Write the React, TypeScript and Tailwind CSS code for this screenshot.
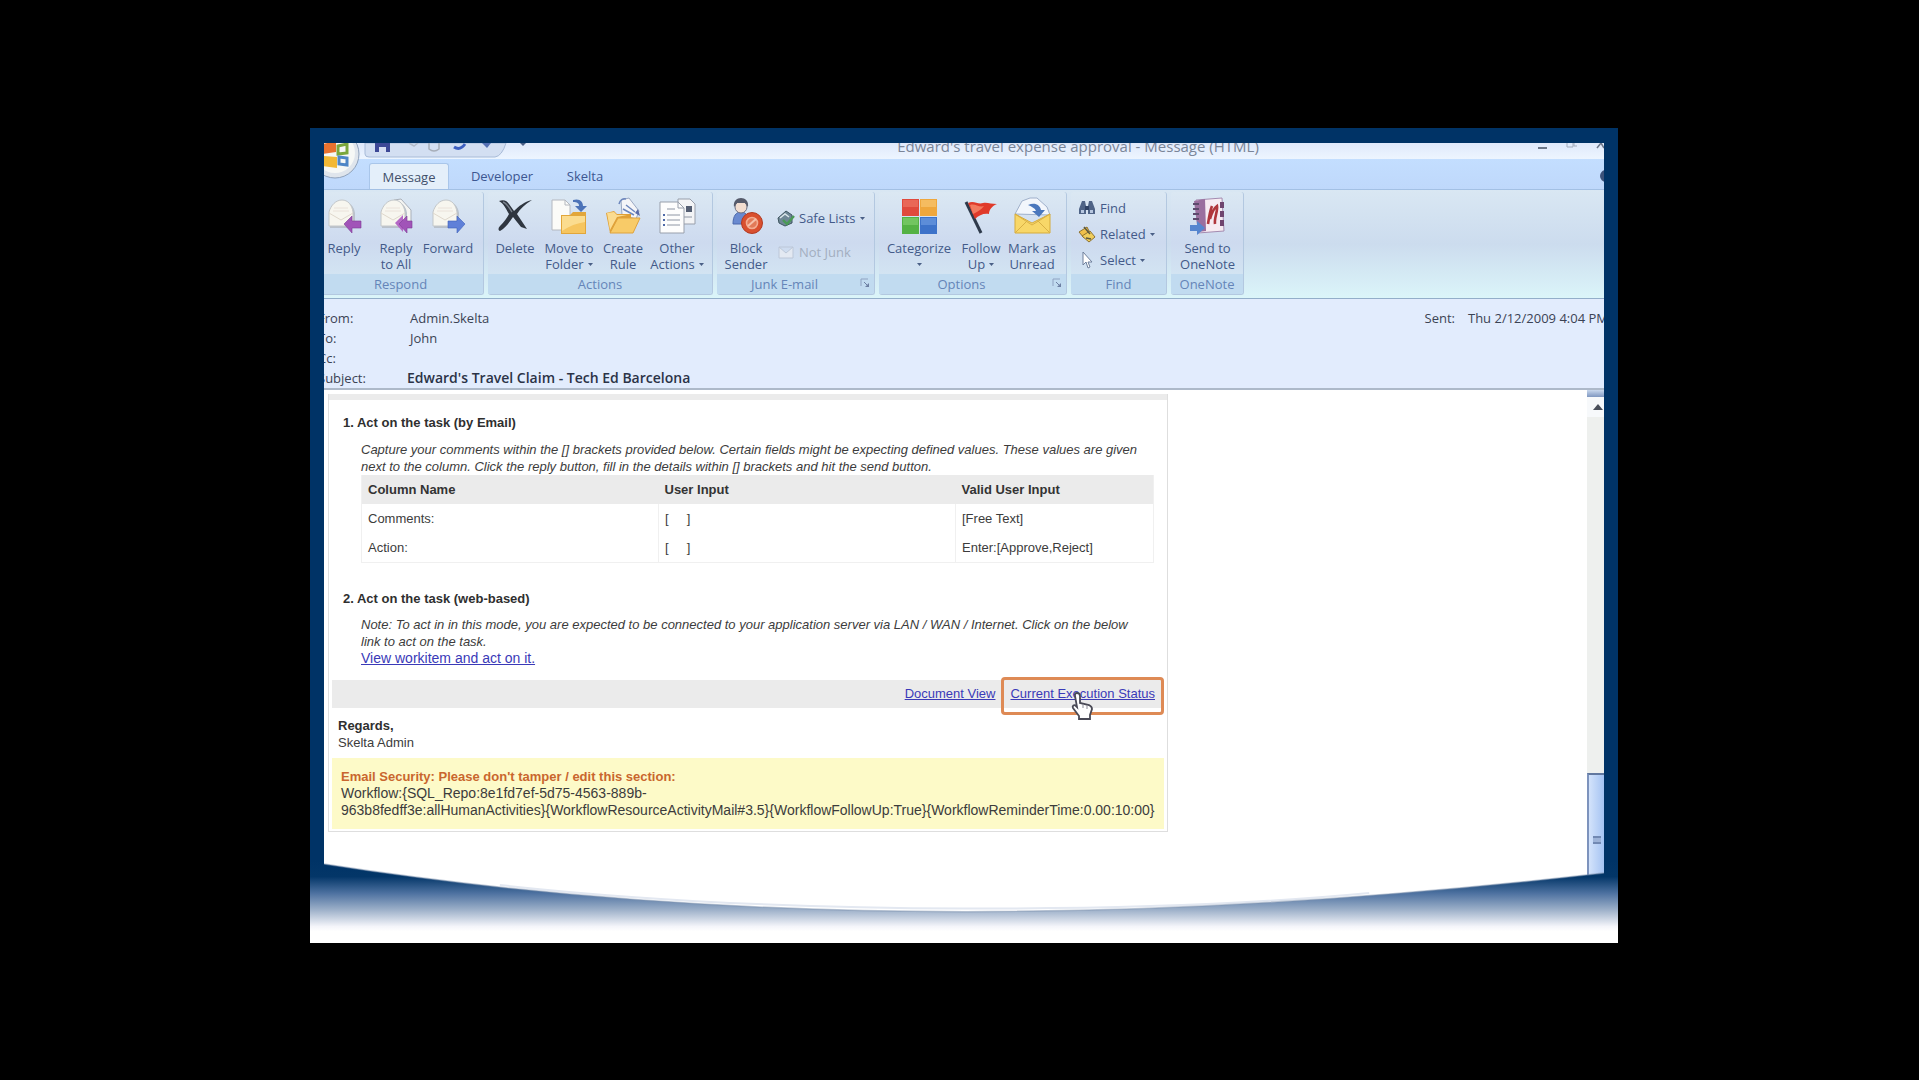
import type { ReactNode } from 'react';

/* ---------- small glyphs ---------- */

function Caret() {
  return (
    <svg className="inline-block h-[3px] w-[5px] shrink-0 align-middle" viewBox="0 0 5 3" aria-hidden="true">
      <path d="M0 0h5L2.5 3z" fill="#4a5f86" />
    </svg>
  );
}

function Launcher() {
  return (
    <svg className="h-[10px] w-[10px]" viewBox="0 0 10 10" fill="none" aria-hidden="true">
      <path d="M1 8V1h7" stroke="#8fa3c2" />
      <path d="M4 4l3 3" stroke="#6d80a3" />
      <path d="M9 5v4H5z" fill="#6d80a3" />
    </svg>
  );
}

/* ---------- ribbon icons, 38 x 38 ---------- */

function Icon({ children }: { children: ReactNode }) {
  return (
    <svg className="h-[38px] w-[38px] shrink-0" viewBox="0 0 38 38" fill="none" aria-hidden="true">
      {children}
    </svg>
  );
}

function EnvelopeShape() {
  return (
    <>
      <path d="M5 31V16C7 9 12 4 18 4s11 5 12 12v15z" fill="#b9c1cb" />
      <path d="M4 29V15C6 8 11 3 17 3s10 5 11 12v14z" fill="#f7f6ef" stroke="#c3c7c9" />
      <path d="M4 16l12 7 12-7" stroke="#dfd8cc" />
      <path d="M8 14h16M9 11h14" stroke="#eae2da" />
    </>
  );
}

function ReplyIcon() {
  return (
    <Icon>
      <EnvelopeShape />
      <path d="M19 27l8-8v5h9v7h-9v5z" fill="#a154b8" stroke="#7d3a96" strokeWidth="0.6" />
    </Icon>
  );
}

function ReplyAllIcon() {
  return (
    <Icon>
      <path d="M17 3l7-1 10 11v15l-4 2z" fill="#f5f5f2" stroke="#a9b0ba" />
      <EnvelopeShape />
      <path d="M18 26l8-8v5h4v7h-4v5z" fill="#b468c6" />
      <path d="M22 27l8-8v5h5v7h-5v5z" fill="#a154b8" stroke="#7d3a96" strokeWidth="0.6" />
    </Icon>
  );
}

function ForwardIcon() {
  return (
    <Icon>
      <EnvelopeShape />
      <path d="M36 27l-8-8v5h-9v7h9v5z" fill="#5f80d8" stroke="#3c5fb8" strokeWidth="0.6" />
    </Icon>
  );
}

function DeleteIcon() {
  return (
    <Icon>
      <path
        d="M3 4c5-2 8 0 10 3l5 7c5-5 10-9 18-11-7 4-12 9-15 14l10 15-6-2-8-10c-5 7-8 11-13 14-2-1-2-3 0-5 4-4 7-8 9-12C10 12 8 7 3 4z"
        fill="#2f3640"
      />
      <path d="M7 5c4 1 6 6 9 10" stroke="#79818c" strokeWidth="1.4" />
    </Icon>
  );
}

function MoveFolderIcon() {
  return (
    <Icon>
      <path d="M2 3h13l5 5v25H2z" fill="#fbfbf8" stroke="#b4b8bf" />
      <path d="M15 3v5h5" stroke="#b4b8bf" />
      <path d="M23 3c7-2 10 2 10 6h4l-6 6-6-6h4c0-3-2-4-6-4z" fill="#4c73b8" />
      <path d="M11 18h9l3-3h13v22H11z" fill="#e2a63a" />
      <path d="M12 19h23v17H12z" fill="#f6c55f" />
      <path d="M12 19h23v6c-8 1-16 4-23 9z" fill="#fbdc8f" />
    </Icon>
  );
}

function CreateRuleIcon() {
  return (
    <Icon>
      <path d="M17 3l8-2 10 13-3 8-14-4z" fill="#f4f5f8" stroke="#9ba9c3" />
      <path d="M15 7c1-4 4-6 7-5M19 12l11 6M22 8l9 7" stroke="#6d87bd" strokeWidth="1.5" />
      <path d="M2 16l8-2 3 3h14v19H6z" fill="#e0a036" />
      <path d="M6 36l8-15h22l-7 15z" fill="#f8cb68" stroke="#dfa23c" />
      <path d="M3 16l7-1 3 3h10L13 20 6 33z" fill="#fbdc90" />
      <path d="M34 12l2 7-5-3z" fill="#5a6ba8" />
    </Icon>
  );
}

function OtherActionsIcon() {
  return (
    <Icon>
      <path d="M20 2h12l5 5v20H20z" fill="#f3f4f6" stroke="#989fab" />
      <path d="M28 9h6v6h-6z" fill="#545e72" />
      <path d="M22 20h12" stroke="#8e96a4" />
      <path d="M2 5h18l6 6v25H2z" fill="#fdfdfd" stroke="#989fab" />
      <path d="M20 5v6h6" stroke="#989fab" />
      <path d="M9 18h13M9 23h13M9 28h13M9 12h8" stroke="#8e96a4" />
      <path d="M5 18h2M5 23h2M5 28h2" stroke="#4f6aa8" strokeWidth="2" />
    </Icon>
  );
}

function BlockSenderIcon() {
  return (
    <Icon>
      <path d="M6 27c0-8 3-12 8-12s8 4 8 12z" fill="#6a8ad0" stroke="#4c69ac" />
      <circle cx="14" cy="10" r="6" fill="#f2ddd0" stroke="#6c6f80" />
      <path d="M7 10c-1-6 3-9 7-9s8 3 7 9l-3-4h-8z" fill="#565b6b" />
      <circle cx="25" cy="26" r="10.5" fill="#d9502f" stroke="#b23a22" />
      <circle cx="25" cy="26" r="5.5" fill="#e27a58" stroke="#f3ab90" strokeWidth="1.6" />
      <path d="M21 29l8-7" stroke="#f6c1ab" strokeWidth="2" />
    </Icon>
  );
}

function CategorizeIcon() {
  return (
    <Icon>
      <path d="M2 2h17v17H2z" fill="#e0493c" />
      <path d="M3 3h15v7H3z" fill="#e96757" />
      <path d="M20 2h17v17H20z" fill="#efa73c" />
      <path d="M21 3h15v7H21z" fill="#f5bc60" />
      <path d="M2 20h17v17H2z" fill="#54b244" />
      <path d="M3 21h15v7H3z" fill="#72c560" />
      <path d="M20 20h17v17H20z" fill="#3d73c9" />
      <path d="M21 21h15v7H21z" fill="#5c8dd8" />
    </Icon>
  );
}

function FlagIcon() {
  return (
    <Icon>
      <path d="M4 5l15 31" stroke="#2e3a4b" strokeWidth="3" />
      <path d="M6 6c6-3 10 2 15 0 4-1 8 1 14 1-5 2-8 6-8 10-5-1-10 1-14 5z" fill="#e03a2a" />
      <path d="M8 8c5-2 9 3 14 1-3 4-7 6-11 8z" fill="#f27a5f" />
    </Icon>
  );
}

function MarkUnreadIcon() {
  return (
    <Icon>
      <path d="M2 17L9 4l8-3h7l10 9 3 8z" fill="#f2f6fc" stroke="#9fb0ca" />
      <path d="M15 8c7-3 12 0 13 5h4l-6 7-7-6h4c-1-3-4-4-8-6z" fill="#4a77bd" />
      <path d="M2 17l17 9 18-9v19H2z" fill="#f8d768" stroke="#d6ab3a" />
      <path d="M2 36l12-12M37 36L25 24" stroke="#d9b045" />
      <path d="M2 17l17 11 18-11" stroke="#d9b045" />
    </Icon>
  );
}

function OneNoteIcon() {
  return (
    <Icon>
      <path d="M7 3l26-2 2 33-26 2z" fill="#f6ebf2" stroke="#a48bb0" />
      <path d="M5 4l11-2 1 32-8 1z" fill="#9a6f9f" />
      <path d="M4 7h6M4 12h6M4 17h6M4 22h6" stroke="#5c4a6d" strokeWidth="2" />
      <path d="M31 5h4v6h-4zM31 14h4v6h-4zM31 23h4v6h-4z" fill="#6f456f" />
      <path d="M19 27c1-7 2-13 4-18M21 22c2-7 4-11 7-13 1 5-3 12-2 18" stroke="#b0363c" strokeWidth="2.6" />
      <path d="M1 28h7v-4l8 7-8 7v-4H1z" fill="#5585cf" />
    </Icon>
  );
}

/* ---------- ribbon parts ---------- */

interface RibbonButtonProps {
  icon: ReactNode;
  top: string;
  bottom?: string;
  menu?: boolean;
  width: string;
}

function RibbonButton({ icon, top, bottom, menu, width }: RibbonButtonProps) {
  return (
    <button type="button" className={`flex shrink-0 flex-col items-center whitespace-nowrap ${width}`}>
      {icon}
      <span className="mt-[5px]">{top}</span>
      <span className="flex h-4 items-center gap-1">
        {bottom}
        {menu && <Caret />}
      </span>
    </button>
  );
}

interface RibbonGroupProps {
  label: string;
  width: string;
  launcher?: boolean;
  children: ReactNode;
}

function RibbonGroup({ label, width, launcher, children }: RibbonGroupProps) {
  return (
    <section
      className={`flex shrink-0 flex-col overflow-hidden rounded-[3px] border-r border-b border-[#b3c8e0] bg-linear-to-b from-[#dbe8f3] via-[#cddaef] to-[#d6eaf4] ${width}`}
    >
      <div className="flex h-[82px] pt-[5px]">{children}</div>
      <h2
        className={`relative flex grow items-center justify-center bg-[#c1dbf0] text-[#6585b8] ${launcher ? 'pr-[22px]' : ''}`}
      >
        {label}
        {launcher && (
          <button type="button" aria-label={`${label} settings`} className="absolute top-1 right-1">
            <Launcher />
          </button>
        )}
      </h2>
    </section>
  );
}

function SmallButton({ icon, label, menu, muted }: { icon: ReactNode; label: string; menu?: boolean; muted?: boolean }) {
  return (
    <button type="button" className={`flex items-center gap-1 whitespace-nowrap ${muted ? 'text-[#a3aebf]' : ''}`}>
      <svg className="h-[18px] w-[18px]" viewBox="0 0 18 18" fill="none" aria-hidden="true">
        {icon}
      </svg>
      <span>{label}</span>
      {menu && <Caret />}
    </button>
  );
}

function Ribbon() {
  return (
    <div className="flex h-[110px] gap-1 overflow-hidden border-t border-b border-t-[#a3c0e4] border-b-[#93aec9] bg-linear-to-b from-[#d9e7f3] via-[#ccdcee] to-[#dbf5f9] pt-[2px] pb-[3px] text-[13px] leading-4 text-[#435a89]">
      <div className="-ml-[6px] flex">
        <RibbonGroup label="Respond" width="w-[166px]">
          <RibbonButton icon={<ReplyIcon />} top="Reply" width="w-[52px]" />
          <RibbonButton icon={<ReplyAllIcon />} top="Reply" bottom="to All" width="w-[52px]" />
          <RibbonButton icon={<ForwardIcon />} top="Forward" width="w-[52px]" />
        </RibbonGroup>
      </div>
      <RibbonGroup label="Actions" width="w-[225px]">
        <RibbonButton icon={<DeleteIcon />} top="Delete" width="w-[54px]" />
        <RibbonButton icon={<MoveFolderIcon />} top="Move to" bottom="Folder" menu width="w-[54px]" />
        <RibbonButton icon={<CreateRuleIcon />} top="Create" bottom="Rule" width="w-[54px]" />
        <RibbonButton icon={<OtherActionsIcon />} top="Other" bottom="Actions" menu width="w-[54px]" />
      </RibbonGroup>
      <RibbonGroup label="Junk E-mail" width="w-[158px]" launcher>
        <RibbonButton icon={<BlockSenderIcon />} top="Block" bottom="Sender" width="w-[58px]" />
        <div className="flex flex-col gap-4 pt-[12px] pl-[2px]">
          <SmallButton
            label="Safe Lists"
            menu
            icon={
              <>
                <path d="M1 9l8-7 6 4v8l-7 3-6-3z" fill="#6f8795" stroke="#3f5560" />
                <path d="M3 9l5-4 4 3" stroke="#dbe6ea" strokeWidth="1.5" />
                <path d="M6 11l4 4 7-8" stroke="#4a9a55" strokeWidth="2.4" />
              </>
            }
          />
          <SmallButton
            label="Not Junk"
            muted
            icon={<path d="M2 4h14v11H2zM2 4l7 6 7-6" fill="#e3e9f2" stroke="#bcc7d8" />}
          />
        </div>
      </RibbonGroup>
      <RibbonGroup label="Options" width="w-[188px]" launcher>
        <RibbonButton icon={<CategorizeIcon />} top="Categorize" menu width="w-[80px]" />
        <RibbonButton icon={<FlagIcon />} top="Follow" bottom="Up" menu width="w-[44px]" />
        <RibbonButton icon={<MarkUnreadIcon />} top="Mark as" bottom="Unread" width="w-[58px]" />
      </RibbonGroup>
      <RibbonGroup label="Find" width="w-[96px]">
        <div className="flex flex-col gap-2 pt-[2px] pl-[7px]">
          <SmallButton
            label="Find"
            icon={
              <>
                <path d="M4 2h3l1 5v8H1v-5zM11 2h3l3 8v5h-7V7z" fill="#4f6487" />
                <path d="M7 7h4v4H7z" fill="#2f4265" />
                <path d="M3 11h3v3H3zM12 11h3v3h-3z" fill="#b7c7e0" />
              </>
            }
          />
          <SmallButton
            label="Related"
            menu
            icon={
              <>
                <path d="M1 7l8-5 3 6-6 5z" fill="#efc04c" stroke="#8e7230" />
                <path d="M4 11l8-5 5 6-6 5z" fill="#f0ce5c" stroke="#8e7230" />
                <path d="M6 2l6 7M8 13l5 1" stroke="#5b5940" strokeWidth="1.5" />
              </>
            }
          />
          <SmallButton
            label="Select"
            menu
            icon={<path d="M5 1v13l3-3 2 6 2-1-2-5h4z" fill="#fff" stroke="#6e7f9b" />}
          />
        </div>
      </RibbonGroup>
      <RibbonGroup label="OneNote" width="w-[73px]">
        <RibbonButton icon={<OneNoteIcon />} top="Send to" bottom="OneNote" width="w-[73px]" />
      </RibbonGroup>
    </div>
  );
}

/* ---------- window chrome ---------- */

function OfficeOrb() {
  return (
    <svg className="absolute -top-[14px] -left-[14px] h-[50px] w-[50px]" viewBox="0 0 50 50" fill="none" aria-hidden="true">
      <circle cx="25" cy="25" r="24" fill="#dfe5ec" stroke="#8fa2bb" />
      <circle cx="25" cy="24" r="20" fill="#f6f8f6" />
      <path d="M13 15l13-3v11l-13 2z" fill="#e8722f" />
      <path d="M28 17l9-2v9l-9 1z" stroke="#7aa73c" strokeWidth="3" />
      <path d="M29 28l8 1v7l-8-1z" stroke="#4e86c6" strokeWidth="3" />
      <path d="M13 27l14 1v11l-14-2z" fill="#f2b835" />
    </svg>
  );
}

function QuickAccess() {
  return (
    <svg className="absolute top-0 left-[40px] h-[16px] w-[170px]" viewBox="0 0 170 16" fill="none" aria-hidden="true">
      <path d="M1 0v11q0 3 4 3h126q7-1 11-14z" fill="#d3dff2" stroke="#a8bbd8" />
      <path d="M11 0h15v9H11z" fill="#3d4896" />
      <path d="M15 4h7v5h-7z" fill="#d7def2" />
      <path d="M45 0l5 3 4-3" stroke="#b4bdcb" strokeWidth="1.5" />
      <path d="M65 0v6q5 4 10 0V0" stroke="#a7aeb9" strokeWidth="1.5" />
      <path d="M90 4q6 4 11-3" stroke="#3d5fc0" strokeWidth="3" />
      <path d="M118 0l5 5 4-5z" fill="#5570b4" />
      <path d="M156 0h6l-3 3z" fill="#4a5f86" />
    </svg>
  );
}

function TitleBar() {
  return (
    <header className="relative flex h-4 items-end justify-center bg-linear-to-b from-[#dfe9fb] to-[#edf5ff]">
      <QuickAccess />
      <h1 className="ml-[228px] text-[15px] leading-[26px] whitespace-nowrap text-[#7a8598]">
        Edward&apos;s travel expense approval - Message (HTML)
      </h1>
      <svg className="absolute top-0 right-0 h-2 w-[70px]" viewBox="0 0 70 8" fill="none" aria-hidden="true">
        <path d="M4 5h9" stroke="#6c7789" strokeWidth="2" />
        <path d="M33 0v4h6V0M40 0v3h3" stroke="#a3adbd" />
        <path d="M63 5l4-5 3 5" stroke="#6c7789" strokeWidth="1.5" />
      </svg>
    </header>
  );
}

function Tabs() {
  return (
    <nav className="relative flex h-[30px] items-end bg-linear-to-b from-[#c3deff] to-[#bfd8fb] pl-[45px] text-[13px] leading-5 text-[#3d5791]">
      <button type="button" className="h-[26px] w-[80px] rounded-t-[3px] border-x border-t border-[#a9c6ea] bg-[#e4effa] text-[#41506b]">
        Message
      </button>
      <button type="button" className="ml-3 h-[26px] w-[82px]">
        Developer
      </button>
      <button type="button" className="ml-3 h-[26px] w-[60px]">
        Skelta
      </button>
      <button type="button" aria-label="Help" className="absolute top-[11px] -right-2 h-3 w-3 rounded-full bg-[#3b5179]" />
    </nav>
  );
}

/* ---------- message ---------- */

const HEADER_ROWS = [
  { label: 'From:', value: 'Admin.Skelta' },
  { label: 'To:', value: 'John' },
  { label: 'Cc:', value: '' },
];

function MessageHeader() {
  return (
    <div className="flex justify-between overflow-hidden border-b-2 border-[#adb9c9] bg-[#e2ecfd] pt-[9px] text-[13px] leading-5 text-[#3b4354]">
      <dl className="-ml-[6px]">
        {HEADER_ROWS.map((row) => (
          <div key={row.label} className="flex">
            <dt className="w-[92px]">{row.label}</dt>
            <dd>{row.value}</dd>
          </div>
        ))}
        <div className="flex">
          <dt className="w-[89px]">Subject:</dt>
          <dd className="text-[14px] font-semibold text-[#2b3347]">Edward&apos;s Travel Claim - Tech Ed Barcelona</dd>
        </div>
      </dl>
      <p className="-mr-1 flex gap-[13px] whitespace-nowrap">
        <span>Sent:</span>
        <span>Thu 2/12/2009 4:04 PM</span>
      </p>
    </div>
  );
}

const FIELDS = [
  { name: 'Comments:', input: '[     ]', valid: '[Free Text]' },
  { name: 'Action:', input: '[     ]', valid: 'Enter:[Approve,Reject]' },
];

function HandCursor() {
  return (
    <svg className="absolute top-[6px] left-[60px] h-[30px] w-[24px]" viewBox="0 0 24 30" aria-hidden="true">
      <path
        d="M7 2c2 0 3 1 3 3v7l9 2c2 1 3 2 3 4l-2 6v4H9v-3l-6-8c-1-2 1-4 3-2l1 1-2-11c0-2 0-3 2-3z"
        fill="#fff"
        stroke="#4a4a56"
        strokeWidth="1.8"
      />
      <path d="M13 13v4M17 14v4" stroke="#8b8b96" />
    </svg>
  );
}

function MessageBody() {
  return (
    <article className="mt-1 ml-1 w-[840px] border-x border-b border-[#dedede] pb-[2px] text-[13px] leading-[17px] text-[#3c3c3c] [font-family:'Liberation_Sans',Arial,sans-serif]">
      <div className="h-[6px] bg-[#ebebeb]" />

      <div className="pr-[13px] pl-[14px]">
        <h2 className="pt-[14px] font-bold text-[#2f2f2f]">1. Act on the task (by Email)</h2>
        <div className="pl-[18px]">
          <p className="pt-[10px] pr-2 italic">
            Capture your comments within the [] brackets provided below. Certain fields might be expecting defined
            values. These values are given next to the column. Click the reply button, fill in the details within []
            brackets and hit the send button.
          </p>
          <table className="w-full table-fixed border-x border-b border-[#f0f0f0] text-left">
            <thead>
              <tr className="h-[29px] bg-[#ebebeb] text-[#333333]">
                <th className="w-[37.5%] pl-[6px]">Column Name</th>
                <th className="w-[37.5%] pl-[6px]">User Input</th>
                <th className="pl-[6px]">Valid User Input</th>
              </tr>
            </thead>
            <tbody>
              {FIELDS.map((field) => (
                <tr key={field.name} className="h-[29px] [&>td+td]:border-l [&>td+td]:border-[#f0f0f0]">
                  <td className="pl-[6px]">{field.name}</td>
                  <td className="pl-[6px] whitespace-pre">{field.input}</td>
                  <td className="pl-[6px]">{field.valid}</td>
                </tr>
              ))}
            </tbody>
          </table>
        </div>

        <h2 className="pt-[27px] font-bold text-[#2f2f2f]">2. Act on the task (web-based)</h2>
        <div className="pl-[18px]">
          <p className="pt-[9px] pr-2 italic">
            Note: To act in in this mode, you are expected to be connected to your application server via LAN / WAN /
            Internet. Click on the below link to act on the task.
          </p>
          <a href="#workitem" className="text-[14px] leading-[17px] text-[#3a3ab8] underline">
            View workitem and act on it.
          </a>
        </div>
      </div>

      <div className="mx-[3px] mt-[13px] flex h-[28px] items-center justify-end bg-[#ebebeb] pr-[9px] text-[#3a3ab8]">
        <a href="#document" className="underline">
          Document View
        </a>
        <span className="relative ml-[15px]">
          <a href="#status" className="underline">
            Current Execution Status
          </a>
          <span className="absolute -inset-x-[9px] -top-2 h-[38px] rounded-[4px] border-[3px] border-[#de8a55]" />
          <HandCursor />
        </span>
      </div>

      <div className="px-[9px] pt-[9px]">
        <p className="font-bold text-[#2f2f2f]">Regards,</p>
        <p>Skelta Admin</p>
      </div>

      <div className="mx-[3px] mt-[7px] bg-[#fdfac8] px-[9px] pt-[10px] pb-[10px]">
        <h3 className="font-bold text-[#c9662e]">Email Security: Please don&apos;t tamper / edit this section:</h3>
        <p className="text-[14px] leading-[17px]">
          Workflow:{'{'}SQL_Repo:8e1fd7ef-5d75-4563-889b-
          <br />
          963b8fedff3e:allHumanActivities{'}{'}WorkflowResourceActivityMail#3.5{'}{'}WorkflowFollowUp:True{'}{'}
          WorkflowReminderTime:0.00:10:00{'}'}
        </p>
      </div>
    </article>
  );
}

function ScrollBar() {
  return (
    <div className="flex w-[17px] shrink-0 flex-col bg-[#eef0ee]">
      <div className="h-[7px] bg-linear-to-b from-[#c9d8ee] to-[#7f97c0]" />
      <button type="button" aria-label="Scroll up" className="flex h-[20px] items-center justify-center bg-[#f7f9fb]">
        <svg className="ml-1 h-[6px] w-[10px]" viewBox="0 0 10 6" aria-hidden="true">
          <path d="M5 0l5 6H0z" fill="#4a4f5a" />
        </svg>
      </button>
      <div className="grow" />
      <div className="flex h-[139px] flex-col items-center border-t-2 border-l-2 border-t-[#62789f] border-l-[#7d93bd] bg-linear-to-r from-[#d3e3fb] to-[#a5c3f2] pt-[61px]">
        <div className="h-[8px] w-[8px] border-y-2 border-[#7189b3] bg-[#9db3d8]" />
      </div>
    </div>
  );
}

/** Curved lower lip of the frame, fading from navy into white. */
function FrameCurve() {
  return (
    <svg
      className="absolute inset-x-0 bottom-0 h-[83px] w-full"
      viewBox="0 0 1309 83"
      preserveAspectRatio="none"
      fill="none"
      aria-hidden="true"
    >
      <defs>
        <linearGradient id="lip" x1="0" y1="0" x2="0" y2="83" gradientUnits="userSpaceOnUse">
          <stop offset="0" stopColor="#003366" />
          <stop offset="0.2" stopColor="#033668" />
          <stop offset="0.4" stopColor="#4d71a0" />
          <stop offset="0.6" stopColor="#9db0c9" />
          <stop offset="0.8" stopColor="#f4f5fa" />
          <stop offset="0.86" stopColor="#ffffff" />
        </linearGradient>
      </defs>
      <path d="M190 25C480 57 850 53 1060 33" stroke="#e3e8f1" strokeWidth="2" />
      <path d="M0 0H14V4C441 70 868 62 1295 13V0H1309V83H0Z" fill="url(#lip)" />
      <path d="M14 4C441 70 868 62 1295 13" stroke="#7f93b0" strokeOpacity="0.5" strokeWidth="1.5" />
    </svg>
  );
}

export default function App() {
  return (
    <main className="min-h-screen bg-black pt-[128px] pr-[301px] pb-[137px] pl-[310px] [font-family:'Open_Sans','Noto_Sans',sans-serif]">
      <div className="relative bg-[#003366] px-[14px] pt-[15px] pb-[31px]">
        <div className="relative overflow-hidden bg-white">
          <TitleBar />
          <Tabs />
          <Ribbon />
          <OfficeOrb />
          <MessageHeader />
          <div className="flex justify-between">
            <div className="pb-[80px]">
              <MessageBody />
            </div>
            <ScrollBar />
          </div>
        </div>
        <FrameCurve />
      </div>
    </main>
  );
}
